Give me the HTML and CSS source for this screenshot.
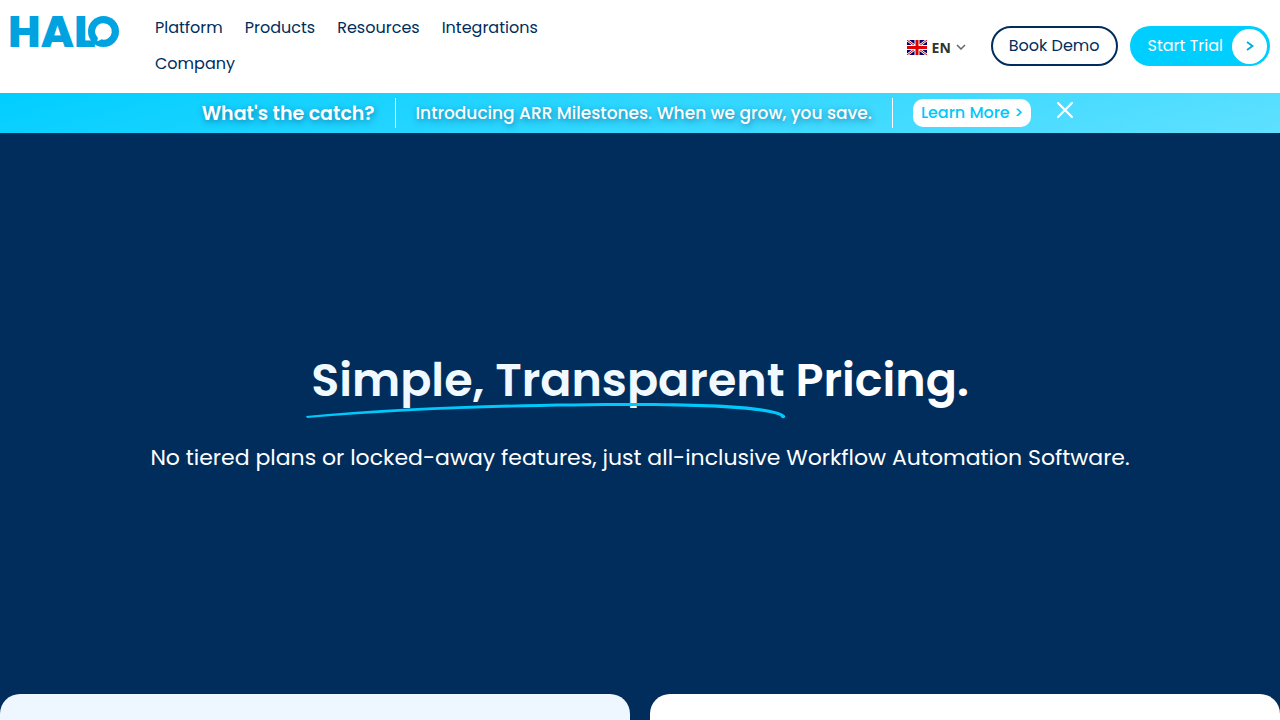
FILE: index.html
```html
<!DOCTYPE html>
<html lang="en">
<head>
  <meta charset="UTF-8">
  <meta name="viewport" content="width=device-width, initial-scale=1">
  <title>Halo Pricing</title>
  <link rel="stylesheet" href="styles.css">
</head>
<body>
  <header class="header">
    <a href="#" class="logo" aria-label="HALO">
      <span class="logo-text">HAL</span>
      <svg class="logo-mark" viewBox="0 0 32 32" aria-hidden="true">
        <circle cx="16" cy="16" r="16" fill="#00a3e0"/>
        <path d="M16 7.500a8.500 8.500 0 1 1-2.500 16.600c-1 1-2.500 1.700-4.500 1.900 1-1.200 1.300-2.400 1-3.900A8.500 8.500 0 0 1 16 7.500z" fill="#fff"/>
      </svg>
    </a>
    <nav class="nav">
      <a href="#">Platform</a>
      <a href="#">Products</a>
      <a href="#">Resources</a>
      <a href="#">Integrations</a>
      <a href="#">Company</a>
    </nav>
    <div class="actions">
      <button type="button" class="lang">
        <svg class="flag" viewBox="0 0 20 15" aria-hidden="true">
          <rect width="20" height="15" rx="1" fill="#006"/>
          <path d="M0 0l20 15M20 0L0 15" stroke="#fff" stroke-width="2.500"/>
          <path d="M0 0l20 15M20 0L0 15" stroke="#d00" stroke-width="1"/>
          <path d="M10 0v15M0 7.500h20" stroke="#fff" stroke-width="5"/>
          <path d="M10 0v15M0 7.500h20" stroke="#d00" stroke-width="3"/>
        </svg>
        EN
        <svg class="chevron" viewBox="0 0 10 6" aria-hidden="true">
          <path d="M1 1l4 4 4-4" fill="none" stroke="#666" stroke-width="1.500"/>
        </svg>
      </button>
      <a href="#" class="btn btn-outline">Book Demo</a>
      <a href="#" class="btn btn-fill">Start Trial
        <span class="btn-arrow">
          <svg viewBox="0 0 8 10" aria-hidden="true">
            <path d="M1 1l5.500 4L1 9" fill="none" stroke="#00a9dc" stroke-width="1.800"/>
          </svg>
        </span>
      </a>
    </div>
  </header>

  <div class="banner">
    <strong class="banner-title">What's the catch?</strong>
    <span class="banner-text">Introducing ARR Milestones. When we grow, you save.</span>
    <a href="#" class="banner-link">Learn More &gt;</a>
    <button type="button" class="banner-close" aria-label="Close">
      <svg viewBox="0 0 16 16" aria-hidden="true">
        <path d="M1 1l14 14M15 1L1 15" stroke="#fff" stroke-width="2.200" stroke-linecap="round"/>
      </svg>
    </button>
  </div>

  <main class="main">
    <section class="hero">
      <h1>
        <span class="underlined">Simple, Transparent<svg class="swoosh" viewBox="0 0 482 18" preserveAspectRatio="none" aria-hidden="true">
            <path d="M1 14C110 4 230 1 330 1C410 1 473 4 481 14C481 17 477 17 476 14C464 8 410 4 330 4C230 4 110 7 2 16z" fill="#00c8fa"/>
          </svg></span>
        Pricing.
      </h1>
      <p>No tiered plans or locked-away features, just all-inclusive Workflow Automation Software.</p>
    </section>
    <section class="cards">
      <div class="card card-blue"></div>
      <div class="card"></div>
    </section>
  </main>
</body>
</html>
```
FILE: styles.css
```css
* {
  box-sizing: border-box;
}
body {
  margin: 0;
  min-height: 100vh;
  display: flex;
  flex-direction: column;
  font-family: Poppins, Inter, sans-serif;
  font-size: 16px;
  color: #002d5c;
  background: #002d5c;
}
a {
  color: inherit;
  text-decoration: none;
}
button {
  font-family: inherit;
  border: none;
  background: none;
  padding: 0;
  cursor: pointer;
}

/* Header */
.header {
  display: flex;
  align-items: flex-start;
  padding: 10px 10px 11px 8px;
  background: #fff;
}
.logo {
  display: flex;
  align-items: center;
  width: 147px;
  height: 44px;
  color: #00a3e0;
}
.logo-text {
  font-size: 44px;
  font-weight: 800;
  line-height: 44px;
}
.logo-mark {
  width: 31px;
  height: 31px;
  margin: 0 0 2px -8px;
  flex-shrink: 0;
}
.nav {
  display: flex;
  flex-wrap: wrap;
  flex: 0 1 460px;
  column-gap: 22px;
  line-height: 36px;
}
.actions {
  display: flex;
  align-items: center;
  margin-left: auto;
  padding-top: 16px;
}
.lang {
  display: flex;
  align-items: center;
  gap: 5px;
  margin-right: 25px;
  padding-top: 2px;
  font-family: "Noto Sans", sans-serif;
  font-size: 14px;
  font-weight: 700;
  color: #333;
}
.flag {
  width: 20px;
  height: 15px;
}
.chevron {
  width: 10px;
  height: 6px;
}
.btn {
  display: flex;
  align-items: center;
  height: 40px;
  padding: 0 16px;
  border-radius: 20px;
  line-height: 22px;
  white-space: nowrap;
}
.btn-outline {
  border: 2px solid #002d5c;
}
.btn-fill {
  gap: 9px;
  margin-left: 12px;
  padding: 0 3px 0 18px;
  color: #fff;
  background: #00ceff;
}
.btn-arrow {
  display: flex;
  align-items: center;
  justify-content: center;
  width: 35px;
  height: 35px;
  border-radius: 50%;
  background: #fff;
}
.btn-arrow svg {
  width: 8px;
  height: 10px;
}

/* Announcement bar */
.banner {
  display: flex;
  align-items: center;
  justify-content: center;
  height: 40px;
  padding-right: 5px;
  color: #fff;
  background: linear-gradient(165deg, #00ceff, #5fe0ff);
  text-shadow: 1px 2px 6px rgba(0, 45, 92, 0.5);
}
.banner-title {
  padding-right: 20px;
  font-size: 19px;
  font-weight: 600;
}
.banner-text {
  padding: 0 20px;
  border-left: 1px solid #fff;
  border-right: 1px solid #fff;
  font-size: 17px;
  font-weight: 500;
  line-height: 30px;
}
.banner-link {
  margin-left: 20px;
  padding: 0 8px;
  border-radius: 10px;
  font-weight: 500;
  line-height: 28px;
  color: #00c8fa;
  background: #fff;
  text-shadow: none;
}
.banner-close {
  margin: 0 0 6px 26px;
}
.banner-close svg {
  display: block;
  width: 16px;
  height: 16px;
}

/* Hero */
.main {
  flex: 1;
  display: flex;
  flex-direction: column;
}
.hero {
  padding: 219px 20px 218px;
  text-align: center;
  color: #fff;
}
h1 {
  margin: 0 0 32px;
  font-size: 46px;
  font-weight: 600;
  line-height: 56px;
}
.underlined {
  position: relative;
  color: #f0f9ff;
}
.swoosh {
  position: absolute;
  left: -6px;
  bottom: -8px;
  width: calc(100% + 8px);
  height: 18px;
}
.hero p {
  margin: 0;
  font-size: 22px;
  line-height: 36px;
}

/* Pricing cards */
.cards {
  flex: 1;
  display: grid;
  grid-template-columns: 1fr 1fr;
  gap: 20px;
}
.card {
  border-radius: 20px 20px 0 0;
  background: #fff;
}
.card-blue {
  background: #eef6ff;
}
```
